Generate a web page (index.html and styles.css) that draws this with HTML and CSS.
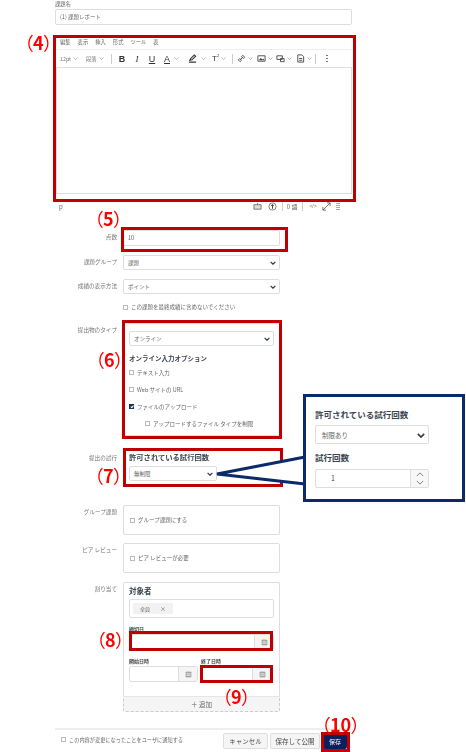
FILE: index.html
```html
<!DOCTYPE html>
<html lang="ja">
<head>
  <meta charset="UTF-8" />
  <meta name="viewport" content="width=device-width, initial-scale=1.0"/>
  <title>課題の編集</title>
  <link rel="stylesheet" href="styles.css">
</head>
<body>

  <svg class="defs" width="0" height="0">
    <symbol id="chev" viewBox="0 0 10 6"><path d="M1 1l4 4 4-4" fill="none" stroke="currentColor" stroke-width="1"/></symbol>
    <symbol id="chevBold" viewBox="0 0 10 6"><path d="M1 1l4 4 4-4" fill="none" stroke="#2d3b45" stroke-width="2"/></symbol>
    <symbol id="cal" viewBox="0 0 10 10"><path d="M1.500 1.500h7v7h-7z" fill="#bbb" stroke="#777" stroke-width=".8"/><path d="M1.500 4h7M1.500 6.200h7" stroke="#eee" stroke-width=".7"/></symbol>
  </svg>

  <div class="page">
    <div class="top-label">課題名</div>
    <div class="input">(1) 課題レポート</div>

    <!-- Editor -->
    <div class="editor">
      <div class="menubar">
        <span>編集</span><span>表示</span><span>挿入</span><span>形式</span><span>ツール</span><span>表</span>
      </div>
      <div class="toolbar">
        <span class="tool tool-text w26">12pt<svg class="chev"><use href="#chev"/></svg></span>
        <span class="tool tool-text w22">段落<svg class="chev"><use href="#chev"/></svg></span>
        <i class="sep"></i>
        <span class="tool w12 glyph b">B</span>
        <span class="tool w12 glyph it">I</span>
        <span class="tool w12 glyph un">U</span>
        <span class="tool w24 pl3"><span class="glyph un-bar">A</span><svg class="chev gap3"><use href="#chev"/></svg></span>
        <span class="tool w23 pl3">
          <svg class="ico" viewBox="0 0 10 10"><path d="M2 7l1-2 4-4 1.500 1.500-4 4zM1 9h8" fill="none" stroke="#333" stroke-width="1.200"/></svg>
          <svg class="chev gap3"><use href="#chev"/></svg>
        </span>
        <span class="tool w21 pl4"><span class="glyph sup">T<sup>2</sup></span><svg class="chev"><use href="#chev"/></svg></span>
        <i class="sep"></i>
        <span class="tool w20">
          <svg class="ico" viewBox="0 0 10 10"><path d="M1.500 6.500l1.500-1.500 2 2-1.500 1.500zM5 3l1.500-1.500 2 2L7 5zM3.500 6.500l3-3" fill="none" stroke="#444" stroke-width="1"/></svg>
          <svg class="chev"><use href="#chev"/></svg>
        </span>
        <span class="tool w19">
          <svg class="ico" viewBox="0 0 10 10"><path d="M1 2h8v6H1z" fill="none" stroke="#444"/><path d="M2 7l2-2.500 2 1.500 1-1 1 2z" fill="#444"/></svg>
          <svg class="chev"><use href="#chev"/></svg>
        </span>
        <span class="tool w20">
          <svg class="ico" viewBox="0 0 10 10"><path d="M1 2h6v4H1zM5 5h4v3.500H5z" fill="none" stroke="#444"/></svg>
          <svg class="chev"><use href="#chev"/></svg>
        </span>
        <span class="tool w19">
          <svg class="ico" viewBox="0 0 10 10"><path d="M2 1h4.500L8.500 3v6H2zM3.500 5h3.500M3.500 7h3.500" fill="none" stroke="#444"/></svg>
          <svg class="chev"><use href="#chev"/></svg>
        </span>
        <i class="sep sep-last"></i>
        <span class="dots"><i></i><i></i><i></i></span>
      </div>
      <div class="edit-area"></div>
      <div class="status">
        <span class="status-p">p</span>
        <svg class="st-ico kb" viewBox="0 0 10 10"><path d="M1 3h8v5H1z" fill="#ddd" stroke="#555" stroke-width=".8"/><path d="M5 1v2" stroke="#555" stroke-width=".8"/></svg>
        <svg class="st-ico a11y" viewBox="0 0 10 10"><circle cx="5" cy="5" r="4" fill="none" stroke="#555" stroke-width=".8"/><path d="M5 2.500v5M3.500 3.800h3" stroke="#444" stroke-width="1.100"/></svg>
        <i class="st-sep"></i>
        <span class="word-count">0 語</span>
        <i class="st-sep"></i>
        <span class="code">&lt;/&gt;</span>
        <svg class="st-ico expand" viewBox="0 0 10 10"><path d="M1 9l8-8M5.500 1H9v3.500M1 5.500V9h3.500" fill="none" stroke="#555" stroke-width=".9"/></svg>
        <span class="grip"></span>
      </div>
    </div>

    <!-- Fields -->
    <div class="row row-points">
      <label>点数</label>
      <div class="input">10</div>
    </div>
    <div class="row row-next">
      <label>課題グループ</label>
      <div class="select">課題<svg class="sel-chev"><use href="#chevBold"/></svg></div>
    </div>
    <div class="row row-next">
      <label>成績の表示方法</label>
      <div class="select">ポイント<svg class="sel-chev"><use href="#chevBold"/></svg></div>
    </div>
    <div class="row row-check">
      <label></label>
      <div class="check-line"><i class="check"></i>この課題を最終成績に含めないでください</div>
    </div>

    <div class="row row-submit">
      <label>提出物のタイプ</label>
      <div class="box submit-box">
        <div class="select">オンライン<svg class="sel-chev"><use href="#chevBold"/></svg></div>
        <h4>オンライン入力オプション</h4>
        <div class="check-line opt"><i class="check"></i>テキスト入力</div>
        <div class="check-line opt"><i class="check"></i>Web サイトの URL</div>
        <div class="check-line opt"><i class="check on"></i>ファイルのアップロード</div>
        <div class="check-line opt indent"><i class="check"></i>アップロードするファイル タイプを制限</div>
      </div>
    </div>

    <div class="row row-attempts">
      <label>提出の試行</label>
      <div class="attempts">
        <h4>許可されている試行回数</h4>
        <div class="select attempts-select">無制限<svg class="sel-chev"><use href="#chevBold"/></svg></div>
      </div>
    </div>

    <div class="row row-group">
      <label>グループ課題</label>
      <div class="box flag-box"><div class="check-line"><i class="check"></i>グループ課題にする</div></div>
    </div>
    <div class="row row-peer">
      <label>ピア レビュー</label>
      <div class="box flag-box"><div class="check-line"><i class="check"></i>ピア レビューが必要</div></div>
    </div>

    <div class="row row-assign">
      <label>割り当て</label>
      <div class="assign">
        <div class="assign-card">
          <h5>対象者</h5>
          <div class="chip-box"><span class="chip">全員<b>×</b></span></div>
          <div class="date-label">締切日</div>
          <div class="date"><span></span><em><svg><use href="#cal"/></svg></em></div>
          <div class="date-pair">
            <div class="date-col start">
              <div class="date-label">開始日時</div>
              <div class="date"><span></span><em><svg><use href="#cal"/></svg></em></div>
            </div>
            <div class="date-col end">
              <div class="date-label">終了日時</div>
              <div class="date"><span></span><em><svg><use href="#cal"/></svg></em></div>
            </div>
          </div>
        </div>
        <div class="assign-add">＋ 追加</div>
      </div>
    </div>

    <div class="footer">
      <div class="check-line notify"><i class="check"></i>この内容が変更になったことをユーザに通知する</div>
      <button class="btn cancel">キャンセル</button>
      <button class="btn publish">保存して公開</button>
      <button class="btn save">保存</button>
    </div>
  </div>

  <!-- Annotations laid over the screenshot -->
  <div class="frame f4"></div>
  <div class="frame f5"></div>
  <div class="frame f6"></div>
  <div class="frame f7"></div>
  <div class="frame f8"></div>
  <div class="frame f9"></div>
  <div class="frame f10"></div>

  <span class="num n4"><i>（</i>4<i>）</i></span>
  <span class="num n5"><i>（</i>5<i>）</i></span>
  <span class="num n6"><i>（</i>6<i>）</i></span>
  <span class="num n7"><i>（</i>7<i>）</i></span>
  <span class="num n8"><i>（</i>8<i>）</i></span>
  <span class="num n9"><i>（</i>9<i>）</i></span>
  <span class="num n10"><i>（</i>10<i>）</i></span>

  <svg class="tail" width="95" height="40" viewBox="0 0 95 40">
    <path d="M92 3L4 20L92 30" fill="#fff" stroke="#0b2a6b" stroke-width="3"/>
  </svg>
  <div class="callout">
    <h4>許可されている試行回数</h4>
    <div class="select callout-select">制限あり<svg class="sel-chev"><use href="#chevBold"/></svg></div>
    <h4 class="callout-sub">試行回数</h4>
    <div class="spin">
      <span>1</span>
      <em>
        <svg viewBox="0 0 10 6"><use href="#chev"/></svg>
        <svg class="down" viewBox="0 0 10 6"><use href="#chev"/></svg>
      </em>
    </div>
  </div>

</body>
</html>
```

FILE: styles.css
```css
html, body {
  margin: 0;
  padding: 0;
}

body {
  width: 466px;
  height: 752px;
  overflow: hidden;
  position: relative;
  background: white;
  color: #666;
  font-family: "Noto Sans CJK JP", "Noto Sans", sans-serif;
  font-size: 6px;
  filter: blur(0.35px);
}

.defs {
  position: absolute;
}

.page {
  width: 297px;
  margin-left: 55px;
}

.top-label {
  height: 9px;
  line-height: 8px;
  font-size: 5.300px;
}

.input, .select {
  display: flex;
  align-items: center;
  box-sizing: border-box;
  height: 16px;
  padding-left: 4px;
  background: white;
  border: 1px solid #ddd;
  border-radius: 2px;
  font-size: 5.500px;
}

.select {
  position: relative;
  height: 15px;
}

.sel-chev {
  position: absolute;
  right: 3px;
  top: 5px;
  width: 6px;
  height: 4px;
}

/* Editor */
.editor {
  margin-top: 10px;
}

.menubar {
  display: flex;
  gap: 7px;
  height: 14px;
  padding-left: 5px;
  padding-top: 3px;
  box-sizing: border-box;
  line-height: 8px;
  font-size: 5.300px;
}

.toolbar {
  display: flex;
  align-items: center;
  height: 18px;
  padding-left: 5px;
  box-sizing: border-box;
  border-top: 1px solid #eee;
}

.tool {
  display: flex;
  align-items: center;
  flex: none;
  box-sizing: border-box;
  height: 12px;
  color: #444;
}

.tool-text {
  font-size: 5.300px;
  color: #777;
}

.w12 { width: 12px; margin-right: 3px; justify-content: center; }
.w19 { width: 19px; }
.w20 { width: 20px; }
.w21 { width: 21px; }
.w22 { width: 22px; }
.w23 { width: 23px; }
.w24 { width: 24px; }
.w26 { width: 26px; }
.pl3 { padding-left: 3px; }
.pl4 { padding-left: 4px; }

.chev {
  width: 5px;
  height: 3px;
  margin-left: 2px;
  color: #777;
}

.gap3 {
  margin-left: 4px;
}

.ico {
  width: 9px;
  height: 9px;
}

.sep {
  flex: none;
  width: 1px;
  height: 10px;
  margin: 0 4px 0 3px;
  background: #ccc;
}

.sep-last {
  margin-left: 0;
}

.glyph {
  font-family: "Liberation Sans", sans-serif;
  font-size: 9px;
  line-height: 10px;
  color: #333;
}

.b { font-weight: bold; }
.it { font-style: italic; font-family: "Liberation Serif", serif; }
.un, .un-bar { text-decoration: underline; }

.sup {
  font-size: 8px;
}

.sup sup {
  font-size: 4px;
  line-height: 0;
}

.dots {
  display: flex;
  flex-direction: column;
  gap: 1.500px;
  margin-left: 6px;
}

.dots i {
  width: 1.500px;
  height: 1.500px;
  background: #777;
}

.edit-area {
  box-sizing: border-box;
  width: 296px;
  height: 127px;
  margin-left: 1px;
  border: 1px solid #ddd;
}

.status {
  display: flex;
  align-items: center;
  height: 12px;
  margin-top: 6px;
  padding-left: 4px;
  font-size: 6px;
}

.status-p {
  margin-right: 190px;
}

.st-ico {
  flex: none;
  width: 9px;
  height: 9px;
}

.a11y {
  margin-left: 6px;
}

.st-sep {
  width: 1px;
  height: 9px;
  margin: 0 4px 0 5px;
  background: #ccc;
}

.word-count {
  white-space: nowrap;
}

.code {
  margin: 0 5px 0 2px;
  font-size: 5px;
  font-family: "Liberation Sans", sans-serif;
}

.grip {
  width: 4px;
  height: 7px;
  margin-left: 5px;
  background: repeating-linear-gradient(#aaa 0 1px, white 1px 2px);
}

/* Form rows */
.row {
  display: grid;
  grid-template-columns: 62px 157px;
  column-gap: 6px;
}

.row label {
  padding-top: 3px;
  text-align: right;
  font-size: 5.600px;
  line-height: 8px;
  color: #777;
}

.row-points { margin-top: 18px; }
.row-next { margin-top: 9px; }
.row-check { margin-top: 9px; }
.row-submit { margin-top: 12px; }
.row-attempts { margin-top: 15px; }
.row-group { margin-top: 21px; }
.row-peer { margin-top: 8px; }
.row-assign { margin-top: 9px; }

.check-line {
  display: flex;
  align-items: center;
  gap: 3px;
  height: 8px;
  font-size: 5.500px;
  white-space: nowrap;
}

.check {
  flex: none;
  position: relative;
  box-sizing: border-box;
  width: 5px;
  height: 5px;
  background: white;
  border: 1px solid #bbb;
}

.check.on {
  background: #14305f;
  border-color: #14305f;
}

.check.on::after {
  content: "";
  position: absolute;
  left: 0.800px;
  top: -0.200px;
  width: 1.200px;
  height: 2.200px;
  border: solid white;
  border-width: 0 0.700px 0.700px 0;
  transform: rotate(40deg);
}

.box {
  box-sizing: border-box;
  background: white;
  border: 1px solid #ddd;
  border-radius: 2px;
}

.submit-box {
  height: 113px;
  padding: 7px 5px 0;
}

.submit-box h4 {
  margin: 7px 0 1px;
  height: 10px;
  line-height: 10px;
  font-size: 6.500px;
  font-weight: bold;
  color: #3c4650;
}

.opt {
  height: 17px;
}

.indent {
  margin-left: 16px;
}

.attempts {
  height: 33px;
  padding-left: 6px;
}

.attempts h4 {
  margin: 0 0 3px;
  height: 12px;
  line-height: 12px;
  font-size: 7.300px;
  font-weight: bold;
  color: #3c4650;
}

.attempts-select {
  width: 88px;
}

.flag-box {
  display: flex;
  align-items: center;
  height: 30px;
  padding-left: 6px;
}

/* Assign to */
.assign-card {
  box-sizing: border-box;
  height: 114px;
  padding: 3px 5px 0;
  border: 1px solid #ddd;
  border-bottom: 0;
  border-radius: 2px 2px 0 0;
}

.assign-card h5 {
  margin: 0 0 3px;
  height: 10px;
  line-height: 10px;
  font-size: 7.500px;
  color: #3c4650;
}

.chip-box {
  box-sizing: border-box;
  height: 19px;
  padding: 3px;
  border: 1px solid #ddd;
  border-radius: 2px;
}

.chip {
  display: flex;
  align-items: center;
  justify-content: space-between;
  box-sizing: border-box;
  width: 40px;
  height: 11px;
  padding: 0 7px;
  background: #f2f2f2;
  font-size: 5px;
}

.chip b {
  font-weight: normal;
  font-size: 6px;
}

.date-label {
  height: 7px;
  margin-top: 7px;
  line-height: 7px;
  font-size: 5px;
  font-weight: bold;
  color: #444;
}

.date {
  display: flex;
  box-sizing: border-box;
  height: 16px;
  margin-top: 2px;
  border: 1px solid #ddd;
  border-radius: 2px;
}

.date span {
  flex: 1;
}

.date em {
  display: flex;
  align-items: center;
  justify-content: center;
  width: 18px;
  background: #f5f5f5;
  border-left: 1px solid #ddd;
}

.date svg {
  width: 7px;
  height: 7px;
}

.date-pair {
  display: flex;
  gap: 3px;
  margin-top: 0;
}

.start { width: 69px; }
.end { width: 71px; }

.assign-add {
  box-sizing: border-box;
  height: 16px;
  line-height: 14px;
  text-align: center;
  font-size: 6.500px;
  background: #f5f5f5;
  border: 1px dashed #ccc;
  border-top: 1px solid #e5e5e5;
  border-radius: 0 0 2px 2px;
}

/* Footer */
.footer {
  display: flex;
  align-items: flex-start;
  width: 292px;
  margin-top: 16px;
  padding: 3px 0 0 6px;
  box-sizing: border-box;
  border-top: 2px solid #eee;
}

.notify {
  height: 10px;
  margin-top: 1px;
  margin-right: auto;
  font-size: 5.200px;
}

.btn {
  box-sizing: border-box;
  height: 16px;
  padding: 0;
  border: 1px solid #ddd;
  border-radius: 2px;
  background: #f5f5f5;
  color: #444;
  font-family: inherit;
  font-size: 6.500px;
}

.cancel { width: 45px; }
.publish { width: 50px; margin-left: 2px; }

.save {
  width: 24px;
  margin-left: 3px;
  border: 0;
  background: #0a1f5c;
  color: white;
  font-size: 6px;
}

/* Annotations */
.frame {
  position: absolute;
  box-sizing: border-box;
  border: 3px solid #c00000;
}

.f4 { left: 53px; top: 35px; width: 303px; height: 167px; }
.f5 { left: 121px; top: 227px; width: 167px; height: 25px; }
.f6 { left: 122px; top: 320px; width: 160px; height: 119px; }
.f7 { left: 123px; top: 448px; width: 160px; height: 39px; }
.f8 { left: 129px; top: 631px; width: 144px; height: 20px; }
.f9 { left: 200px; top: 665px; width: 73px; height: 18px; }
.f10 { left: 321px; top: 732px; width: 29px; height: 20px; }

.num {
  position: absolute;
  color: #f00;
  font-size: 18px;
  font-weight: bold;
  line-height: 18px;
  white-space: nowrap;
  font-feature-settings: "palt";
}

.num i {
  font-style: normal;
  font-weight: normal;
}

.n4 { left: 24px; top: 33px; }
.n5 { left: 94px; top: 209px; }
.n6 { left: 95px; top: 350px; }
.n7 { left: 94px; top: 466px; }
.n8 { left: 96px; top: 630px; }
.n9 { left: 222px; top: 687px; }
.n10 { left: 321px; top: 715px; }

.tail {
  position: absolute;
  left: 213px;
  top: 454px;
}

.callout {
  position: absolute;
  left: 303px;
  top: 394px;
  box-sizing: border-box;
  width: 162px;
  height: 108px;
  padding: 11px 0 0 9px;
  background: white;
  border: 3px solid #0b2a6b;
}

.callout h4 {
  margin: 0;
  height: 12px;
  line-height: 12px;
  font-size: 8.500px;
  color: #3c4650;
}

.callout-select {
  width: 114px;
  height: 19px;
  margin-top: 5px;
  padding-left: 6px;
  font-size: 6.500px;
}

.callout-select .sel-chev {
  width: 8px;
  height: 5px;
  top: 7px;
}

.callout .callout-sub {
  margin-top: 7px;
}

.spin {
  display: flex;
  box-sizing: border-box;
  width: 114px;
  height: 19px;
  margin-top: 6px;
  border: 1px solid #ddd;
  border-radius: 2px;
  color: #444;
  font-size: 7px;
}

.spin span {
  flex: 1;
  padding-left: 15px;
  line-height: 17px;
}

.spin em {
  display: flex;
  flex-direction: column;
  justify-content: space-around;
  align-items: center;
  width: 17px;
  background: #f7f7f7;
  border-left: 1px solid #ddd;
}

.spin svg {
  width: 8px;
  height: 5px;
  color: #666;
}

.spin svg:first-child {
  transform: rotate(180deg);
}
```
